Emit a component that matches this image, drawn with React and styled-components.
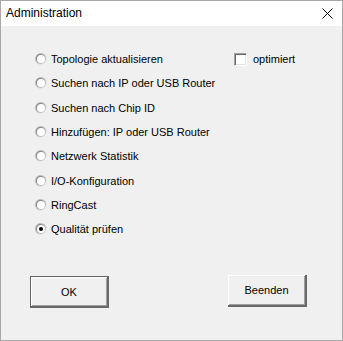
import React, { useState } from "react";
import styled, { createGlobalStyle } from "styled-components";

const GlobalStyle = createGlobalStyle`
	html, body {
		margin: 0;
		padding: 0;
		background: #f0f0f0;
	}
`;

const Window = styled.div`
	width: 343px;
	height: 341px;
	box-sizing: border-box;
	border: 1px solid #a8a8a8;
	background: #f0f0f0;
	display: flex;
	flex-direction: column;
	font-family: "Liberation Sans", Arial, sans-serif;
	color: #000;
`;

const TitleBar = styled.div`
	height: 25px;
	background: #fff;
	display: flex;
	align-items: center;
	justify-content: space-between;
	padding: 0 9px 0 5px;
	font-size: 12px;
	flex-shrink: 0;
`;

const Title = styled.span`
	margin-top: -1px;
`;

const CloseIcon = () => (
	<svg width="11" height="11" viewBox="0 0 11 11">
		<path d="M0.5 0.5 L10.5 10.5 M10.5 0.5 L0.5 10.5" stroke="#000" strokeWidth="1" />
	</svg>
);

const Body = styled.div`
	flex: 1;
	padding: 21px 0 0 34px;
	font-size: 11px;
`;

const OptionsArea = styled.div`
	display: grid;
	grid-template-columns: 199px auto;
	align-items: start;
`;

const RadioList = styled.div`
	display: grid;
	grid-auto-rows: 24.3px;
`;

const OptionRow = styled.label`
	display: flex;
	align-items: center;
	gap: 4px;
	cursor: default;
	white-space: nowrap;
`;

const RadioIcon = ({ checked }) => (
	<svg width="12" height="12" viewBox="0 0 12 12">
		<defs>
			<linearGradient id="rOuter" x1="0" y1="0" x2="1" y2="1">
				<stop offset="0" stopColor="#a0a0a0" />
				<stop offset="1" stopColor="#ffffff" />
			</linearGradient>
			<linearGradient id="rInner" x1="0" y1="0" x2="1" y2="1">
				<stop offset="0" stopColor="#696969" />
				<stop offset="1" stopColor="#e3e3e3" />
			</linearGradient>
		</defs>
		<circle cx="6" cy="6" r="6" fill="url(#rOuter)" />
		<circle cx="6" cy="6" r="5" fill="url(#rInner)" />
		<circle cx="6" cy="6" r="4" fill="#fff" />
		{checked && <circle cx="6" cy="6" r="2" fill="#000" />}
	</svg>
);

const CheckRow = styled.label`
	display: flex;
	align-items: center;
	gap: 6px;
	height: 24.3px;
	white-space: nowrap;
`;

const CheckBox = styled.span`
	width: 13px;
	height: 13px;
	box-sizing: border-box;
	background: #fff;
	border-top: 1px solid #a0a0a0;
	border-left: 1px solid #a0a0a0;
	border-right: 1px solid #fff;
	border-bottom: 1px solid #fff;
	box-shadow: inset 1px 1px 0 #696969, inset -1px -1px 0 #e3e3e3;
`;

const ButtonRow = styled.div`
	display: flex;
	align-items: flex-start;
	gap: 119px;
	margin: 34px 0 0 -5px;
`;

const Button = styled.button`
	width: 79px;
	height: 32px;
	box-sizing: border-box;
	margin-top: ${p => (p.$default ? "1px" : "0")};
	font-family: "Liberation Sans", Arial, sans-serif;
	font-size: 11px;
	color: #000;
	background: #f0f0f0;
	padding: 0;
	border: ${p => (p.$default ? "1px solid #646464" : "none")};
	border-bottom: 2px solid #696969;
	border-right: 2px solid #696969;
	box-shadow: inset 1px 1px 0 #fff, inset -1px -1px 0 #a0a0a0;
	outline: none;
`;

const options = [
	"Topologie aktualisieren",
	"Suchen nach IP oder USB Router",
	"Suchen nach Chip ID",
	"Hinzufügen: IP oder USB Router",
	"Netzwerk Statistik",
	"I/O-Konfiguration",
	"RingCast",
	"Qualität prüfen"
];

const App = () => {
	const [selected, setSelected] = useState(7);
	const [optimized, setOptimized] = useState(false);

	return (
		<Window>
			<GlobalStyle />
			<TitleBar>
				<Title>Administration</Title>
				<CloseIcon />
			</TitleBar>
			<Body>
				<OptionsArea>
					<RadioList>
						{options.map((o, i) => (
							<OptionRow key={o} onClick={() => setSelected(i)}>
								<RadioIcon checked={selected === i} />
								<span>{o}</span>
							</OptionRow>
						))}
					</RadioList>
					<CheckRow onClick={() => setOptimized(!optimized)}>
						<CheckBox />
						<span>optimiert</span>
					</CheckRow>
				</OptionsArea>
				<ButtonRow>
					<Button $default>OK</Button>
					<Button>Beenden</Button>
				</ButtonRow>
			</Body>
		</Window>
	);
};

export default App;
